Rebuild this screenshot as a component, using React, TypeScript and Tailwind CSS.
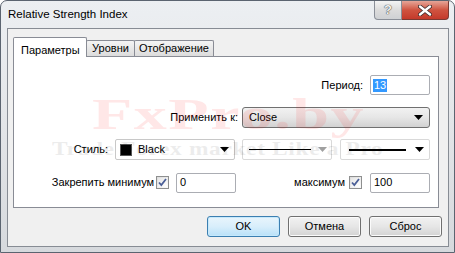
import React from "react";

const font = { fontFamily: '"Liberation Sans", Arial, sans-serif' };

function Arrow({ color = "#000" }: { color?: string }) {
  return (
    <svg width="9" height="5" viewBox="0 0 9 5">
      <polygon points="0,0 9,0 4.5,5" fill={color} />
    </svg>
  );
}

function Check() {
  return (
    <div className="w-[13px] h-[13px] border border-[#8e8f8f] bg-gradient-to-br from-[#dcdcdc] to-[#fbfbfb] flex items-center justify-center">
      <div className="w-[9px] h-[9px] bg-gradient-to-br from-[#e6e6e6] to-[#ffffff] flex items-center justify-center">
        <svg width="9" height="9" viewBox="0 0 9 9">
          <path d="M1 4.5 L3.3 7 L8 1" stroke="#4b5f97" strokeWidth="1.8" fill="none" />
        </svg>
      </div>
    </div>
  );
}

function TextBox({ w, children }: { w: string; children: React.ReactNode }) {
  return (
    <div className={`${w} h-[20px] border border-[#abadb3] rounded-[2px] bg-white flex items-center pl-[3px] text-[11px] text-black`}>
      {children}
    </div>
  );
}

function WinButton({ label, focused }: { label: string; focused?: boolean }) {
  return (
    <div
      className={
        focused
          ? "w-[73px] h-[21px] rounded-[3px] border border-[#3c7fb1] flex items-center justify-center text-[11px] text-black bg-gradient-to-b from-[#e9f5fc] via-[#d8eefb] to-[#b9e1f8] shadow-[inset_0_0_0_1px_#c6e9fc]"
          : "w-[73px] h-[21px] rounded-[3px] border border-[#707070] flex items-center justify-center text-[11px] text-black bg-gradient-to-b from-[#f2f2f2] via-[#e6e6e6] to-[#d3d3d3] shadow-[inset_0_0_0_1px_#fbfbfb]"
      }
    >
      {label}
    </div>
  );
}

export default function App() {
  return (
    <div
      className="w-[455px] h-[253px] flex flex-col rounded-t-[7px] border border-[#5b6470] bg-gradient-to-b from-[#eceff2] via-[#e3e5e8] to-[#d6d9dd] overflow-hidden"
      style={font}
    >
      {/* Title bar */}
      <div className="h-[27px] flex items-start shrink-0">
        <div className="pl-[7px] pt-[8px] text-[11.5px] text-black leading-none">Relative Strength Index</div>
        <div className="ml-auto mr-[5px] flex">
          <div className="w-[28px] h-[19px] border border-[#8a8f98] border-t-0 rounded-bl-[4px] bg-gradient-to-b from-[#f4f4f4] via-[#dcdcdc] to-[#cfd1d4] flex items-center justify-center text-[13px] font-bold text-[#f4f4f4] [text-shadow:0_0_1px_#333,0_0_1px_#333]">
            ?
          </div>
          <div className="w-[47px] h-[19px] border border-[#7a3a33] border-t-0 border-l-0 rounded-br-[4px] bg-gradient-to-b from-[#e5a598] via-[#cf5340] to-[#c4392a] flex items-center justify-center">
            <svg width="14" height="11" viewBox="0 0 14 11">
              <path d="M2 1.5 L12 9.5 M12 1.5 L2 9.5" stroke="#3a2a2a" strokeWidth="4" strokeLinecap="round" />
              <path d="M2 1.5 L12 9.5 M12 1.5 L2 9.5" stroke="#ffffff" strokeWidth="2.4" strokeLinecap="round" />
            </svg>
          </div>
        </div>
      </div>

      {/* Client */}
      <div className="ml-[6px] mr-[5px] h-[219px] border border-[#878c94] bg-[#f0f0f0] flex flex-col shrink-0">
        <div className="ml-[5px] pt-[8px] w-[426px]">
          {/* tabs */}
          <div className="flex items-end h-[19px]">
            <div className="relative z-10 -mb-px w-[74px] h-[20px] bg-white border border-b-0 border-[#898c95] rounded-t-[2px] flex items-start pt-[4px] pl-[7px] text-[11px] text-black">
              Параметры
            </div>
            <div className="w-[49px] h-[16px] -ml-px bg-gradient-to-b from-[#f4f4f4] to-[#dcdcdc] border border-b-0 border-[#898c95] rounded-t-[2px] flex items-center justify-center text-[11px] text-black">
              Уровни
            </div>
            <div className="w-[80px] h-[16px] -ml-px bg-gradient-to-b from-[#f4f4f4] to-[#dcdcdc] border border-b-0 border-[#898c95] rounded-t-[2px] flex items-center justify-center text-[11px] text-black">
              Отображение
            </div>
          </div>
          {/* panel */}
          <div className="relative h-[152px] bg-white border border-[#898c95] flex flex-col pr-[8px] text-[11px] text-black">
            {/* row 1 */}
            <div className="mt-[18px] h-[20px] flex items-center justify-end gap-[7px]">
              <span>Период:</span>
              <div className="w-[60px] h-[20px] border border-[#abadb3] rounded-[2px] bg-white flex items-center pl-[2px]">
                <span className="bg-[#3399ff] text-white leading-[13px] px-px">13</span>
              </div>
            </div>
            {/* row 2 */}
            <div className="mt-[12px] h-[21px] flex items-center justify-end gap-[4px]">
              <span>Применить к:</span>
              <div className="w-[188px] h-[21px] border border-[#707070] rounded-[3px] bg-gradient-to-b from-[#f2f2f2] via-[#e6e6e6] to-[#d2d2d2] flex items-center pl-[6px] pr-[6px]">
                <span>Close</span>
                <span className="ml-auto flex"><Arrow /></span>
              </div>
            </div>
            {/* row 3 */}
            <div className="mt-[11px] h-[21px] flex items-center justify-end">
              <span className="mr-[7px]">Стиль:</span>
              <div className="w-[120px] h-[21px] border border-[#c8c8c8] rounded-[2px] bg-white flex items-center pl-[4px] pr-[5px]">
                <div className="w-[12px] h-[12px] bg-black border border-[#555]" />
                <span className="ml-[6px]">Black</span>
                <span className="ml-auto flex"><Arrow /></span>
              </div>
              <div className="ml-[7px] w-[90px] h-[21px] border border-[#d9d9d9] rounded-[2px] bg-white flex items-center pl-[6px] pr-[4px]">
                <div className="w-[62px] h-px bg-black" />
                <span className="ml-auto flex"><Arrow color="#a0a0a0" /></span>
              </div>
              <div className="ml-[8px] w-[90px] h-[21px] border border-[#d9d9d9] rounded-[2px] bg-white flex items-center pl-[8px] pr-[5px]">
                <div className="w-[57px] h-[2px] bg-black" />
                <span className="ml-auto flex"><Arrow /></span>
              </div>
            </div>
            {/* row 4 */}
            <div className="mt-[12px] h-[21px] flex items-center justify-end">
              <span className="mr-[2px]">Закрепить минимум</span>
              <Check />
              <div className="ml-[7px]">
                <TextBox w="w-[60px]">0</TextBox>
              </div>
              <span className="ml-[58px] mr-[4px]">максимум</span>
              <Check />
              <div className="ml-[8px]">
                <TextBox w="w-[60px]">100</TextBox>
              </div>
            </div>

            {/* watermark */}
            <div
              className="pointer-events-none absolute left-[78px] top-[36px] text-[44px] font-bold tracking-[1px] leading-none text-[#ff0000] opacity-[0.09] origin-left scale-x-[1.5] whitespace-nowrap"
              style={{ fontFamily: '"Liberation Serif", "Times New Roman", serif' }}
            >
              FxPro.by
            </div>
            <div
              className="pointer-events-none absolute left-[38px] top-[83px] text-[18px] font-bold tracking-[0.5px] leading-none text-[#000] opacity-[0.07] whitespace-nowrap origin-left scale-x-[1.3]"
              style={{ fontFamily: '"Liberation Serif", "Times New Roman", serif' }}
            >
              Trade Forex market Like a Pro
            </div>
          </div>
        </div>

        {/* buttons */}
        <div className="mt-[8px] flex justify-end gap-[8px] pr-[6px]">
          <WinButton label="OK" focused />
          <WinButton label="Отмена" />
          <WinButton label="Сброс" />
        </div>
      </div>
    </div>
  );
}
